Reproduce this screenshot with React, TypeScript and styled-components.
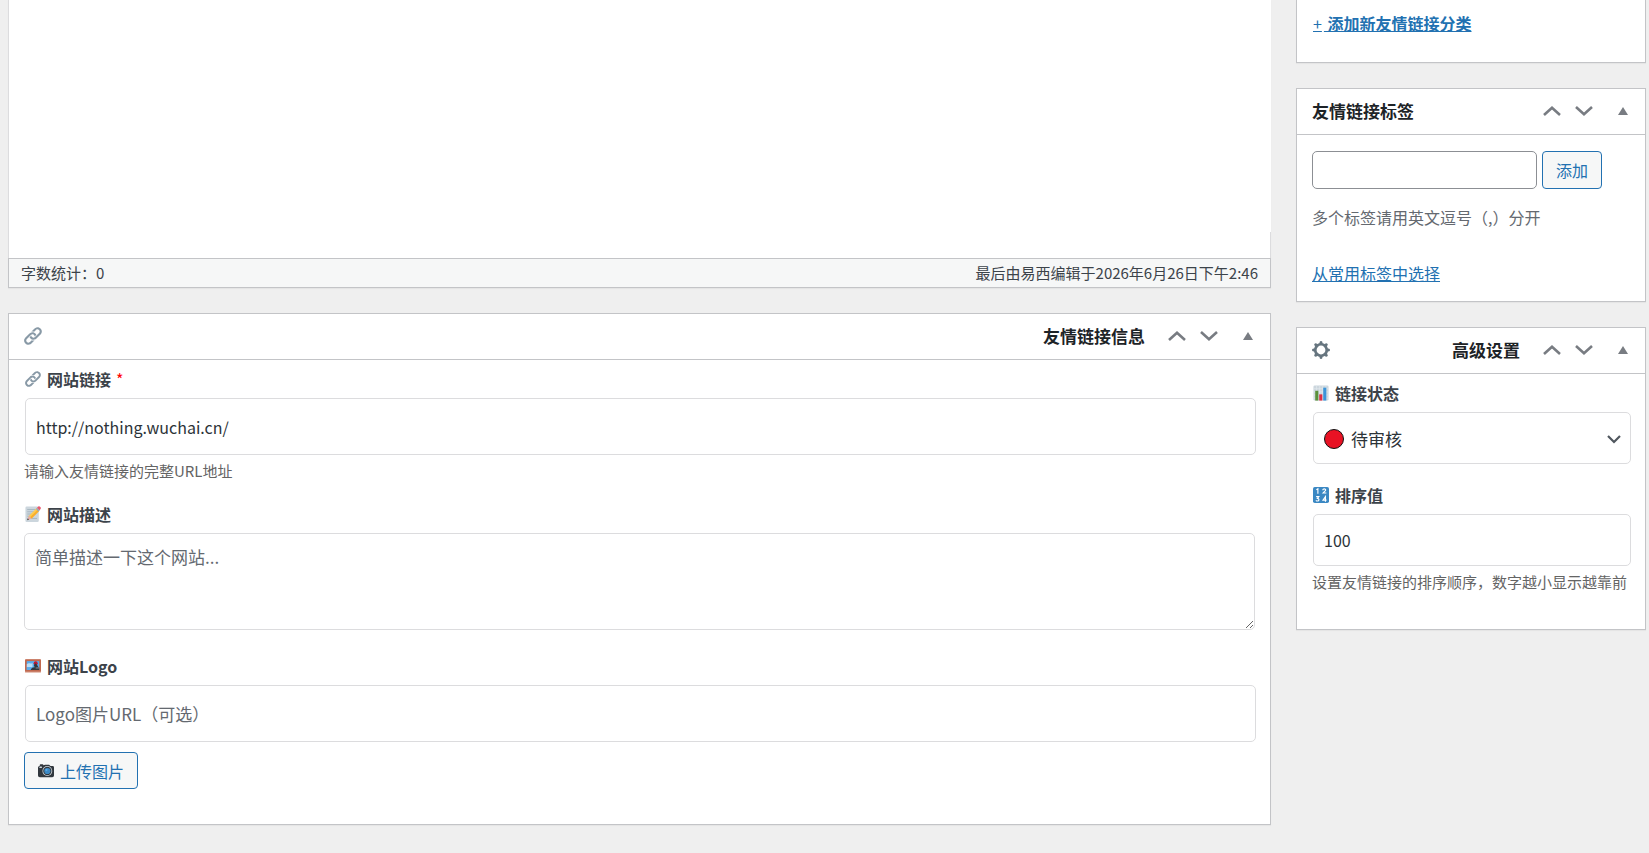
import React, { useState } from 'react';
import styled, { createGlobalStyle } from 'styled-components';

const GlobalStyle = createGlobalStyle`
  *, *::before, *::after { box-sizing: border-box; }
  body {
    margin: 0;
    background: #efefef;
    color: #3c434a;
    font-family: "Noto Sans CJK SC", "Noto Sans", sans-serif;
    font-size: 16px;
    line-height: 24px;
  }
  button, input, select, textarea { font-family: inherit; margin: 0; }
`;

const Page = styled.div`
  display: grid;
  grid-template-columns: minmax(0, 1fr) 350px;
  align-items: start;
  gap: 25px;
  padding: 0 3px 28px 8px;
`;

const Main = styled.main`
  display: flex;
  flex-direction: column;
  gap: 25px;
`;

const Sidebar = styled.aside`
  display: flex;
  flex-direction: column;
  gap: 25px;
`;

const Editor = styled.section`
  background: #fff;
  box-shadow: 0 1px 1px rgba(0, 0, 0, 0.04);
`;

const EditorContent = styled.div`
  height: 232px;
  border-left: 1px solid #dcdcde;
`;

const EditorFoot = styled.div`
  height: 26px;
  border: solid #dcdcde;
  border-width: 0 1px;
`;

const StatusBar = styled.div`
  display: flex;
  justify-content: space-between;
  padding: 2px 12px;
  border: 1px solid #c3c4c7;
  background: #f6f7f7;
  font-size: 15px;
`;

const Box = styled.section<{ $cut?: boolean }>`
  background: #fff;
  border: 1px solid #c3c4c7;
  border-top-width: ${(p) => (p.$cut ? '0' : '1px')};
  box-shadow: 0 1px 1px rgba(0, 0, 0, 0.04);
`;

const BoxHeader = styled.header`
  display: flex;
  height: 46px;
  border-bottom: 1px solid #c3c4c7;
`;

const BoxTitle = styled.h2`
  flex: 1;
  display: flex;
  align-items: center;
  justify-content: space-between;
  height: 44px;
  margin: 0;
  padding: 0 16px 0 15px;
  color: #1d2327;
  font-size: 17px;
  font-weight: 700;
  line-height: 24px;
`;

const IconButton = styled.button<{ $wide?: boolean }>`
  display: flex;
  align-items: center;
  justify-content: center;
  width: ${(p) => (p.$wide ? '45px' : '32px')};
  height: ${(p) => (p.$wide ? '43px' : '44px')};
  padding: 0;
  border: 0;
  background: none;
  color: #787c82;
  cursor: pointer;
`;

const BoxBody = styled.div<{ $top: number; $bottom?: number }>`
  padding: ${(p) => p.$top}px 15px ${(p) => p.$bottom ?? 15}px;
`;

const Field = styled.div`
  margin-bottom: 20px;
`;

const Label = styled.label`
  display: flex;
  align-items: center;
  gap: 6px;
  margin-bottom: 8px;
  padding-left: 1px;
  font-weight: 700;
  line-height: 22px;
`;

const Required = styled.span`
  margin-left: -1px;
  color: #f00;
  font-weight: 400;
`;

const TextInput = styled.input<{ $compact?: boolean; $filled?: boolean }>`
  display: block;
  width: 100%;
  height: ${(p) => (p.$compact ? '52px' : '57px')};
  padding: 0 10px;
  position: relative;
  left: 1px;
  border: 1px solid #dcdcde;
  border-radius: 5px;
  background: #fff;
  color: #2c3338;
  font-size: ${(p) => (p.$filled ? '16px' : '17px')};
  appearance: textfield;
  &::placeholder { color: #646970; opacity: 1; }
  &::-webkit-inner-spin-button { display: none; }
`;

const TextArea = styled.textarea`
  display: block;
  width: 100%;
  height: 97px;
  margin-bottom: 25px;
  padding: 10px;
  border: 1px solid #dcdcde;
  border-radius: 5px;
  background: #fff;
  color: #2c3338;
  font-size: 17px;
  line-height: 25px;
  resize: vertical;
  &::placeholder { color: #646970; opacity: 1; }
`;

const Hint = styled.p`
  margin: 4px 0 0;
  color: #646464;
  font-size: 15px;
  white-space: nowrap;
`;

const Button = styled.button<{ $tall?: boolean }>`
  display: inline-flex;
  align-items: center;
  justify-content: center;
  gap: 6px;
  height: ${(p) => (p.$tall ? '38px' : '37px')};
  padding: 0 13px;
  border: 1px solid #2271b1;
  border-radius: 4px;
  background: #f6f7f7;
  color: #2271b1;
  font-size: 16px;
  cursor: pointer;
`;

const UploadRow = styled.div`
  display: flex;
  margin-top: 10px;
`;

const SelectWrap = styled.div`
  position: relative;
  left: 1px;
`;

const Select = styled.select`
  display: block;
  width: 100%;
  height: 52px;
  padding: 0 30px 0 37px;
  border: 1px solid #dcdcde;
  border-radius: 5px;
  background: #fff;
  color: #2c3338;
  font-size: 17px;
  appearance: none;
`;

const StatusDot = styled.span`
  position: absolute;
  top: 17px;
  left: 11px;
  width: 20px;
  height: 20px;
  border: 1px solid #111;
  border-radius: 50%;
  background: #e81224;
  pointer-events: none;
`;

const SelectArrow = styled.svg`
  position: absolute;
  top: 23px;
  right: 10px;
  pointer-events: none;
`;

const TagRow = styled.div`
  display: flex;
  gap: 5px;
`;

const TagInput = styled.input`
  width: 225px;
  height: 38px;
  padding: 0 10px;
  border: 1px solid #8c8f94;
  border-radius: 5px;
  background: #fff;
  font-size: 16px;
`;

const TagHelp = styled.p`
  margin: 16px 0 32px;
  color: #646970;
`;

const Link = styled.a<{ $strong?: boolean }>`
  color: #2271b1;
  font-weight: ${(p) => (p.$strong ? 700 : 400)};
  text-decoration: underline;
`;

const Plus = styled.span`
  padding: 0 2px 0 1px;
  font-weight: 400;
`;

function Chevron({ down }: { down?: boolean }) {
  return (
    <svg width="18" height="10" viewBox="0 0 18 10" fill="none" stroke="currentColor" strokeWidth="2.6" aria-hidden="true">
      <path d={down ? 'M1 1l8 7.2L17 1' : 'M1 9l8-7.2L17 9'} />
    </svg>
  );
}

function Triangle() {
  return (
    <svg width="10" height="8" viewBox="0 0 10 8" fill="currentColor" aria-hidden="true">
      <path d="M5 0l5 8H0z" />
    </svg>
  );
}

function LinkIcon({ size = 16 }: { size?: number }) {
  return (
    <svg width={size} height={size} viewBox="0 0 36 36" fill="#8899A6" aria-hidden="true">
      <path d="M15 9l6-6s6-6 12 0 0 12 0 12l-8 8s-6 6-12 0c-1.125-1.125-1.822-2.62-1.822-2.62l3.353-3.348S14.396 18.396 16 20c0 0 3 3 6 0l8-8s3-3 0-6-6 0-6 0l-3.729 3.729s-1.854-1.521-5.646-.354L15 9z" />
      <path d="M20.845 27l-6 6s-6 6-12 0 0-12 0-12l8-8s6-6 12 0c1.125 1.125 1.822 2.62 1.822 2.62l-3.354 3.349s.135-1.365-1.469-2.969c0 0-3-3-6 0l-8 8s-3 3 0 6 6 0 6 0l3.729-3.729s1.854 1.521 5.646.354l-.374.375z" />
    </svg>
  );
}

function GearIcon() {
  const teeth = [0, 45, 90, 135, 180, 225, 270, 315];
  return (
    <svg width="18" height="18" viewBox="0 0 36 36" aria-hidden="true">
      <circle cx="18" cy="18" r="11.5" fill="none" stroke="#66757F" strokeWidth="5.4" />
      {teeth.map((a) => (
        <path key={a} d="M14.500 6l1-4.500Q16 0 18 0t2.500 1.500l1 4.500z" fill="#66757F" transform={`rotate(${a} 18 18)`} />
      ))}
    </svg>
  );
}

function ChartIcon() {
  return (
    <svg width="16" height="16" viewBox="0 0 36 36" aria-hidden="true">
      <rect x="1" y="1" width="34" height="34" rx="3" fill="#CCD6DD" />
      <path d="M1 8.500h34M1 15.500h34M1 22.500h34M1 29.500h34M8 1v34M15 1v34M22 1v34M29 1v34" stroke="#E1E8ED" strokeWidth="1.600" />
      <rect x="5" y="13" width="7" height="22" fill="#5C913B" />
      <rect x="14" y="21" width="7" height="14" fill="#DD2E44" />
      <rect x="23" y="6" width="7" height="29" fill="#3B94D9" />
    </svg>
  );
}

function NumbersIcon() {
  return (
    <svg width="16" height="16" viewBox="0 0 36 36" aria-hidden="true">
      <rect width="36" height="36" rx="4" fill="#3B88C3" />
      <g fill="none" stroke="#fff" strokeWidth="2.600">
        <path d="M7.500 6l3.500-2V15" />
        <path d="M22 7.500c0-4.500 7-4 6.500-.5-.5 2-3.500 3.500-6 6.500h7.500" />
        <path d="M7 21.500h6l-3 4c4.500 0 4.500 6 0 6-1.500 0-2.500-.5-3.500-1.500" />
        <path d="M28 33V21.500l-5.500 8h8" />
      </g>
    </svg>
  );
}

function MemoIcon() {
  return (
    <svg width="16" height="16" viewBox="0 0 36 36" aria-hidden="true">
      <rect x="1" y="1" width="30" height="35" rx="3" fill="#CCD6DD" />
      <path d="M5 8h20M5 13h17M5 18h12M5 23h8M5 28h22" stroke="#99AAB5" strokeWidth="1.600" />
      <path d="M9 22L26 5l6 6-17 17-8.500 3z" fill="#FFCC4D" />
      <path d="M9 22l6 6-9.500 3.500z" fill="#E6AAAA" />
      <path d="M6.500 28l2.500 2.500-4.500 1.500z" fill="#292F33" />
      <path d="M12 25L29 8l3 3-17 17z" fill="#F4900C" opacity=".5" />
      <path d="M24.500 6.500l2.700-2.700 6 6-2.700 2.700z" fill="#99AAB5" />
      <path d="M27 4l2.500-2.500c1.500-1.500 3.500-1 5 .5s1.500 3.500.5 4.700L33 9.500z" fill="#EA596E" />
    </svg>
  );
}

function PictureIcon() {
  return (
    <svg width="16" height="16" viewBox="0 0 36 36" aria-hidden="true">
      <rect x="0" y="3" width="36" height="31" rx="2" fill="#E8C4B8" />
      <rect x="0" y="3" width="36" height="28" rx="2" fill="#C1694F" />
      <rect x="4" y="7" width="28" height="20" fill="#55ACEE" />
      <path d="M4 14c5-4 8 0 13-3v10H4z" fill="#BBDDF5" />
      <path d="M12 27l4-5 8-2 8 2v5z" fill="#31373D" />
      <path d="M4 21h11l-3 6H4z" fill="#5DADEC" />
      <circle cx="24" cy="12" r="4.500" fill="#BE1931" />
      <path d="M20 17l3-5 4 3 3 5-8 1z" fill="#31373D" />
      <path d="M24 21h8v3h-8z" fill="#66757F" />
    </svg>
  );
}

function CameraIcon() {
  return (
    <svg width="16" height="16" viewBox="0 0 36 36" aria-hidden="true">
      <path d="M4 6V4.500Q4 3 5.500 3h5Q12 3 12 4.500V5l4-1h9l3 3h5q3 0 3 3v18q0 4-4 4H4q-4 0-4-4V10q0-3 4-4z" fill="#31373D" />
      <circle cx="21" cy="18" r="11" fill="#CCD6DD" />
      <circle cx="21" cy="18" r="9.300" fill="#31373D" />
      <circle cx="21" cy="18" r="7" fill="#3B88C3" />
      <circle cx="19" cy="16" r="2.500" fill="#55ACEE" />
      <rect x="3" y="8" width="6" height="3" rx="1" fill="#CCD6DD" />
    </svg>
  );
}

function HeaderControls({ name }: { name: string }) {
  return (
    <>
      <IconButton type="button" aria-label={`上移 ${name}`}><Chevron /></IconButton>
      <IconButton type="button" aria-label={`下移 ${name}`}><Chevron down /></IconButton>
      <IconButton type="button" $wide aria-label={`切换面板 ${name}`}><Triangle /></IconButton>
    </>
  );
}

export default function App() {
  const [url, setUrl] = useState('http://nothing.wuchai.cn/');
  const [order, setOrder] = useState('100');

  return (
    <>
      <GlobalStyle />
      <Page>
        <Main>
          <Editor>
            <EditorContent />
            <EditorFoot />
            <StatusBar>
              <span>字数统计：0</span>
              <span>最后由易西编辑于2026年6月26日下午2:46</span>
            </StatusBar>
          </Editor>

          <Box>
            <BoxHeader>
              <BoxTitle><LinkIcon size={18} /><span>友情链接信息</span></BoxTitle>
              <HeaderControls name="友情链接信息" />
            </BoxHeader>
            <BoxBody $top={8}>
              <Field>
                <Label htmlFor="site-url"><LinkIcon />网站链接<Required>*</Required></Label>
                <TextInput id="site-url" $filled type="url" value={url} onChange={(e) => setUrl(e.target.value)} />
                <Hint>请输入友情链接的完整URL地址</Hint>
              </Field>
              <Field>
                <Label htmlFor="site-desc"><MemoIcon />网站描述</Label>
                <TextArea id="site-desc" placeholder="简单描述一下这个网站..." />
              </Field>
              <Field>
                <Label htmlFor="site-logo"><PictureIcon />网站Logo</Label>
                <TextInput id="site-logo" type="url" placeholder="Logo图片URL（可选）" />
                <UploadRow>
                  <Button type="button"><CameraIcon />上传图片</Button>
                </UploadRow>
              </Field>
            </BoxBody>
          </Box>
        </Main>

        <Sidebar>
          <Box $cut>
            <BoxBody $top={11} $bottom={27}>
              <Link $strong href="#add-category"><Plus>+</Plus> 添加新友情链接分类</Link>
            </BoxBody>
          </Box>

          <Box>
            <BoxHeader>
              <BoxTitle>友情链接标签</BoxTitle>
              <HeaderControls name="友情链接标签" />
            </BoxHeader>
            <BoxBody $top={16} $bottom={16}>
              <TagRow>
                <TagInput type="text" aria-label="添加标签" />
                <Button type="button" $tall>添加</Button>
              </TagRow>
              <TagHelp>多个标签请用英文逗号（,）分开</TagHelp>
              <Link href="#tag-cloud">从常用标签中选择</Link>
            </BoxBody>
          </Box>

          <Box>
            <BoxHeader>
              <BoxTitle><GearIcon /><span>高级设置</span></BoxTitle>
              <HeaderControls name="高级设置" />
            </BoxHeader>
            <BoxBody $top={8}>
              <Field>
                <Label htmlFor="link-status"><ChartIcon />链接状态</Label>
                <SelectWrap>
                  <Select id="link-status" defaultValue="pending">
                    <option value="pending">待审核</option>
                  </Select>
                  <StatusDot />
                  <SelectArrow width="14" height="9" viewBox="0 0 14 9" fill="none" stroke="#50575e" strokeWidth="2.2" aria-hidden="true">
                    <path d="M1 1l6 6 6-6" />
                  </SelectArrow>
                </SelectWrap>
              </Field>
              <Field>
                <Label htmlFor="link-order"><NumbersIcon />排序值</Label>
                <TextInput id="link-order" $compact $filled type="number" value={order} onChange={(e) => setOrder(e.target.value)} />
                <Hint>设置友情链接的排序顺序，数字越小显示越靠前</Hint>
              </Field>
            </BoxBody>
          </Box>
        </Sidebar>
      </Page>
    </>
  );
}
